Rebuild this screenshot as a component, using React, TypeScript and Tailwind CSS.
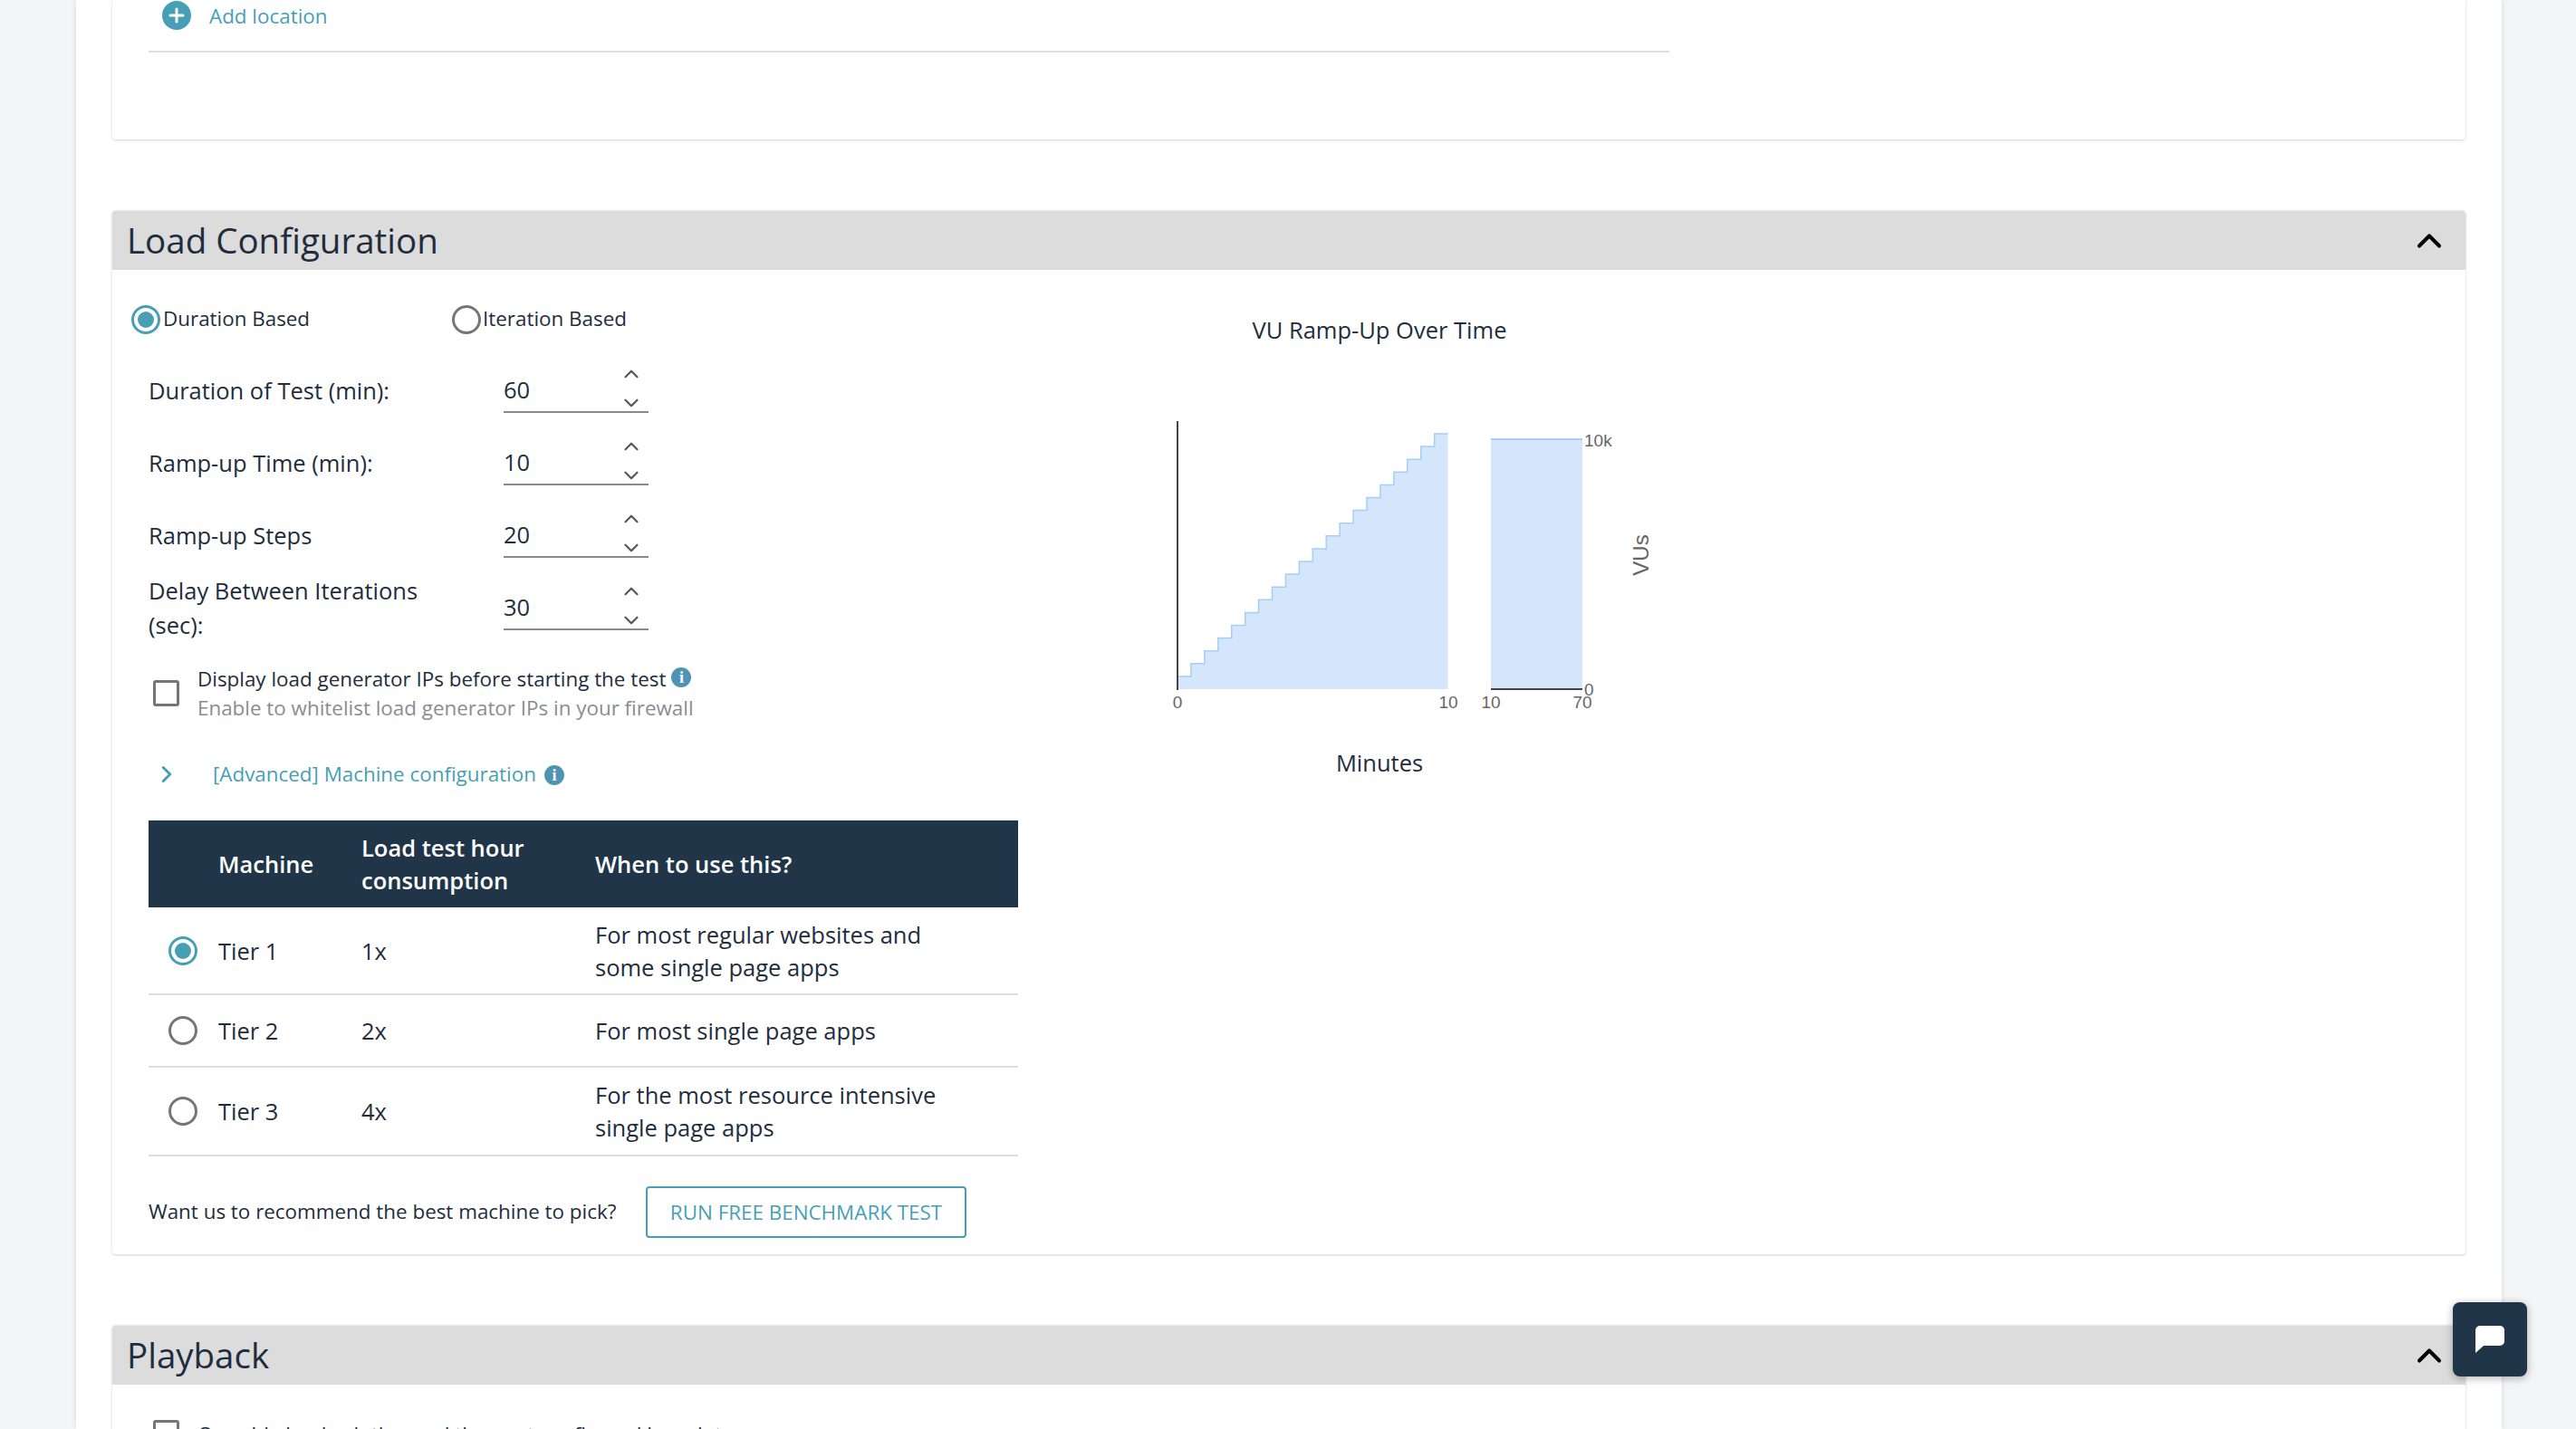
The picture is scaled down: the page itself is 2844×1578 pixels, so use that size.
import { ChevronDown, ChevronRight, ChevronUp, Plus } from "lucide-react";

const tiers = [
  { name: "Tier 1", rate: "1x", use: ["For most regular websites and", "some single page apps"], h: "h-[97px]", on: true },
  { name: "Tier 2", rate: "2x", use: ["For most single page apps"], h: "h-[80px]", on: false },
  { name: "Tier 3", rate: "4x", use: ["For the most resource intensive", "single page apps"], h: "h-[98px]", on: false },
];

const fields = [
  { label: ["Duration of Test (min):"], value: "60" },
  { label: ["Ramp-up Time (min):"], value: "10" },
  { label: ["Ramp-up Steps"], value: "20" },
  { label: ["Delay Between Iterations", "(sec):"], value: "30" },
];

function Radio({ on }: { on?: boolean }) {
  return (
    <span className={`flex h-[32px] w-[32px] shrink-0 items-center justify-center rounded-full border-[3px] ${on ? "border-[#479fb6]" : "border-[#757575]"}`}>
      {on && <span className="h-[18px] w-[18px] rounded-full bg-[#479fb6]" />}
    </span>
  );
}

function Checkbox() {
  return <span className="h-[29px] w-[29px] shrink-0 rounded-[3px] border-[3px] border-[#757575]" />;
}

function InfoDot() {
  return (
    <span className="flex h-[22px] w-[22px] items-center justify-center rounded-full bg-[#4d94b5] font-['Liberation_Serif',serif] text-[18px] leading-none font-bold text-white">
      i
    </span>
  );
}

function Header({ title }: { title: string }) {
  return (
    <div className="flex h-[65px] items-center justify-between rounded-t-[4px] bg-[#dcdcdc] pr-[18px] pl-[16px] shadow-[0_-1px_2px_rgba(0,0,0,0.08)]">
      <h2 className="text-[38.5px] text-[#1f2d3d]">{title}</h2>
      <ChevronUp size={44} strokeWidth={2.2} className="text-black" />
    </div>
  );
}

function Chart() {
  const w = 14.93;
  const h = 14.1;
  let line = "M1300 760";
  for (let i = 0; i < 20; i++) {
    const y = 760 - (i + 1) * h;
    line += ` V${y} H${1300 + (i + 1) * w}`;
  }
  const tick = "font-['Liberation_Sans',sans-serif] text-[19px] fill-[#666666]";
  return (
    <svg width="600" height="340" viewBox="1223 450 600 340" className="overflow-visible">
      <path d={`${line} V760 Z`} fill="#d3e6fc" />
      <path d={line} fill="none" stroke="#a8cdf5" strokeWidth="1.5" />
      <rect x="1646" y="484" width="101" height="276" fill="#d3e6fc" />
      <line x1="1646" y1="484" x2="1747" y2="484" stroke="#a8cdf5" strokeWidth="2" />
      <line x1="1300" y1="464" x2="1300" y2="761" stroke="#444444" strokeWidth="2" />
      <line x1="1646" y1="760" x2="1747" y2="760" stroke="#444444" strokeWidth="2" />
      <text x="1300" y="781" textAnchor="middle" className={tick}>0</text>
      <text x="1599" y="781" textAnchor="middle" className={tick}>10</text>
      <text x="1646" y="781" textAnchor="middle" className={tick}>10</text>
      <text x="1747" y="781" textAnchor="middle" className={tick}>70</text>
      <text x="1749" y="492" className={tick}>10k</text>
      <text x="1749" y="767" className={tick}>0</text>
      <text x="1820" y="612" textAnchor="middle" transform="rotate(-90 1820 612)" className="font-['Liberation_Sans',sans-serif] text-[24px] fill-[#666666]">VUs</text>
    </svg>
  );
}

export default function App() {
  return (
    <div className="relative h-[1578px] overflow-hidden bg-[#f4f5f7] font-['Open_Sans',sans-serif] text-[#1f2d3d]">
      <div className="ml-[84px] h-full w-[2678px] bg-white px-[40px] shadow-[0_0_6px_rgba(0,0,0,0.12)]">
        <section className="h-[154px] rounded-b-[4px] bg-white pt-[1px] pl-[40px] shadow-[0_1px_3px_rgba(0,0,0,0.18)]">
          <div className="box-content flex h-[55px] w-[1679px] items-start border-b-[2px] border-[#dedede]">
            <span className="ml-[15px] flex h-[32px] w-[32px] items-center justify-center rounded-full bg-[#479fb6] text-white">
              <Plus size={24} strokeWidth={3} />
            </span>
            <span className="ml-[20px] text-[22.4px] leading-[34px] text-[#479fb6]">Add location</span>
          </div>
        </section>

        <section className="mt-[79px] h-[1152px] rounded-[4px] bg-white shadow-[0_1px_3px_rgba(0,0,0,0.18)]">
          <Header title="Load Configuration" />
          <div className="flex pl-[40px]">
            <div className="w-[960px]">
              <div className="mt-[39px] -ml-[19px] flex h-[31px] items-center text-[22.4px]">
                <Radio on />
                <span className="ml-[3px] -mt-[2px] w-[319px]">Duration Based</span>
                <Radio />
                <span className="ml-[2px] -mt-[2px]">Iteration Based</span>
              </div>
              <div className="pt-[8px]">
                {fields.map((f) => (
                  <div key={f.value} className="mt-[30px] flex h-[50px] items-center text-[25.5px]">
                    <div className="-mt-[1px] w-[392px] leading-[38px]">
                      {f.label.map((l) => <div key={l}>{l}</div>)}
                    </div>
                    <div className="flex h-[50px] w-[160px] items-center justify-between border-b-[2px] border-[#8a8a8a] pr-[6px]">
                      <span>{f.value}</span>
                      <div className="-mt-[2px] flex flex-col gap-[6px] text-[#555555]">
                        <ChevronUp size={26} strokeWidth={2} />
                        <ChevronDown size={26} strokeWidth={2} />
                      </div>
                    </div>
                  </div>
                ))}
              </div>
              <div className="mt-[37px] flex items-center pl-[5px]">
                <Checkbox />
                <div className="ml-[20px] mt-[1px] text-[22.4px] leading-[32px]">
                  <div className="flex items-start gap-[6px]">
                    <span>Display load generator IPs before starting the test</span>
                    <span className="mt-[3px]"><InfoDot /></span>
                  </div>
                  <div className="text-[#8a8d90]">Enable to whitelist load generator IPs in your firewall</div>
                </div>
              </div>
              <div className="mt-[41px] flex h-[32px] items-center text-[22.4px] text-[#479fb6]">
                <ChevronRight size={30} strokeWidth={2.4} className="ml-[5px]" />
                <span className="ml-[36px]">[Advanced] Machine configuration</span>
                <span className="mt-[2px] ml-[9px]"><InfoDot /></span>
              </div>

              <div className="mt-[35px] text-[25.5px]">
                <div className="flex h-[96px] items-center bg-[#203548] leading-[36px] font-semibold text-white">
                  <div className="w-[77px]" />
                  <div className="w-[158px]">Machine</div>
                  <div className="w-[258px]">Load test hour<br />consumption</div>
                  <div>When to use this?</div>
                </div>
                {tiers.map((t) => (
                  <div key={t.name} className={`flex ${t.h} items-center border-b-[2px] border-[#dedede] leading-[36px]`}>
                    <div className="w-[77px] pl-[22px]"><Radio on={t.on} /></div>
                    <div className="w-[158px]">{t.name}</div>
                    <div className="w-[258px]">{t.rate}</div>
                    <div>{t.use.map((l) => <div key={l}>{l}</div>)}</div>
                  </div>
                ))}
              </div>

              <div className="mt-[33px] flex items-center">
                <span className="-mt-[2px] w-[549px] text-[22.4px]">Want us to recommend the best machine to pick?</span>
                <span className="flex h-[57px] w-[354px] items-center justify-center rounded-[4px] border-[2px] border-[#479fb6] text-[22.4px] text-[#479fb6]">RUN FREE BENCHMARK TEST</span>
              </div>
            </div>

            <div className="ml-[99px] flex w-[600px] flex-col items-center">
              <div className="mt-[47px] text-[25.5px]">VU Ramp-Up Over Time</div>
              <div className="mt-[68px]"><Chart /></div>
              <div className="mt-[32px] text-[25.5px]">Minutes</div>
            </div>
          </div>
        </section>

        <section className="mt-[79px] rounded-[4px] bg-white shadow-[0_1px_3px_rgba(0,0,0,0.18)]">
          <Header title="Playback" />
          <div className="mt-[39px] flex items-start pl-[45px] text-[22.4px]">
            <Checkbox />
            <span className="ml-[20px] -mt-[1px]">Override load solution and time out configured in script</span>
          </div>
        </section>
      </div>

      <div className="absolute top-[1438px] left-[2708px] flex h-[82px] w-[82px] items-center justify-center rounded-[8px] bg-[#203548] shadow-[0_2px_10px_rgba(0,0,0,0.3)]">
        <svg width="32" height="30" viewBox="0 0 32 30">
          <path d="M5 0H27a5 5 0 0 1 5 5V17a5 5 0 0 1-5 5H9L0 30V5a5 5 0 0 1 5-5Z" fill="#ffffff" />
        </svg>
      </div>
    </div>
  );
}
